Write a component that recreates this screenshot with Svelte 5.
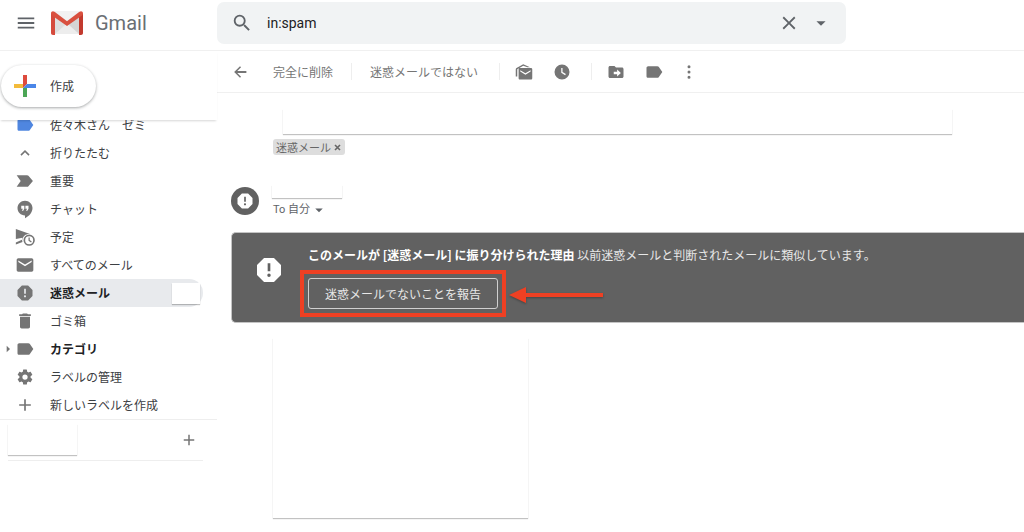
<script lang="ts">
  type NavItem = {
    label: string;
    icon: string;
    bold?: boolean;
    selected?: boolean;
    expandable?: boolean;
    color?: string;
  };

  let query = "in:spam";

  const items: NavItem[] = [
    { label: "佐々木さん　ゼミ", icon: "label", color: "#4f86e0" },
    { label: "折りたたむ", icon: "collapse" },
    { label: "重要", icon: "important" },
    { label: "チャット", icon: "chat" },
    { label: "予定", icon: "scheduled" },
    { label: "すべてのメール", icon: "mail" },
    { label: "迷惑メール", icon: "spam", bold: true, selected: true },
    { label: "ゴミ箱", icon: "trash" },
    { label: "カテゴリ", icon: "label", bold: true, expandable: true },
    { label: "ラベルの管理", icon: "gear" },
    { label: "新しいラベルを作成", icon: "plus" },
  ];

  const paths: Record<string, string> = {
    menu: "M3 18h18v-2H3v2zm0-5h18v-2H3v2zm0-7v2h18V6H3z",
    search:
      "M15.5 14h-.79l-.28-.27A6.47 6.47 0 0 0 16 9.5 6.5 6.5 0 1 0 9.5 16c1.61 0 3.09-.59 4.23-1.57l.27.28v.79l5 4.99L20.49 19l-4.99-5zm-6 0C7.01 14 5 11.99 5 9.5S7.01 5 9.5 5 14 7.01 14 9.5 11.99 14 9.5 14z",
    close:
      "M19 6.41L17.59 5 12 10.59 6.41 5 5 6.41 10.59 12 5 17.59 6.41 19 12 13.41 17.59 19 19 17.59 13.41 12z",
    down: "M7 10l5 5 5-5z",
    right: "M10 17l5-5-5-5z",
    back: "M20.5 10.7H8.4l5-5L12 4.2 4.2 12l7.8 7.8 1.4-1.5-5-5h12.1z",
    label:
      "M17.63 5.84C17.27 5.33 16.67 5 16 5H5c-1.1 0-2 .9-2 2v10c0 1.1.9 2 2 2h11c.67 0 1.27-.33 1.63-.84L22 12l-4.37-6.16z",
    collapse: "M12 8.5l-5.5 5.4 1.3 1.3L12 11l4.2 4.2 1.3-1.3z",
    important:
      "M2 19h12.5c.67 0 1.27-.33 1.63-.84L21.5 12l-5.37-6.16c-.36-.51-.96-.84-1.63-.84H2l4.84 7z",
    chat: "M12 2C7 2 3 6 3 10.9s4 8.9 9 8.9V23c5.2-2.4 9-7 9-12.1C21 6 17 2 12 2zM11.2 11.7L9.8 14.2H8.2l1.3-2.5H7.5V8.2h3.7zm5 0l-1.4 2.5h-1.6l1.3-2.5h-2V8.2h3.7z",
    scheduled:
      "M1 2.5l17 6c-4.500-.6-8.300 2-9 6.500L1 18.500zM1 21v-6.500L9 13c-.6 2-.5 3.500 0 5zM17 9a6.800 6.800 0 1 0 0 13.600A6.800 6.800 0 0 0 17 9zm0 11.600a4.800 4.800 0 1 1 0-9.600 4.800 4.800 0 0 1 0 9.600zM16.200 12.500h1.500v3.200l2.400 1.600-.9 1.200-3-2z",
    mail: "M20 4H4c-1.1 0-2 .9-2 2v12c0 1.1.9 2 2 2h16c1.1 0 2-.9 2-2V6c0-1.1-.9-2-2-2zm0 4.5l-8 5-8-5v-2l8 5 8-5z",
    spam: "M15.73 3H8.27L3 8.27v7.46L8.27 21h7.46L21 15.73V8.27zM12 17.3a1.3 1.3 0 1 1 0-2.6 1.3 1.3 0 0 1 0 2.6zM13 13h-2V7h2z",
    trash: "M6 19c0 1.1.9 2 2 2h8c1.1 0 2-.9 2-2V7H6v12zM19 4h-3.5l-1-1h-5l-1 1H5v2h14V4z",
    gear: "M19.43 12.98c.04-.32.07-.64.07-.98s-.03-.66-.07-.98l2.11-1.65c.19-.15.24-.42.12-.64l-2-3.46c-.12-.22-.39-.3-.61-.22l-2.49 1c-.52-.4-1.08-.73-1.69-.98l-.38-2.65A.49.49 0 0 0 14 2h-4c-.25 0-.46.18-.49.42l-.38 2.65c-.61.25-1.17.59-1.69.98l-2.49-1c-.23-.09-.49 0-.61.22l-2 3.46c-.13.22-.07.49.12.64l2.11 1.65c-.04.32-.07.65-.07.98s.03.66.07.98l-2.11 1.65c-.19.15-.24.42-.12.64l2 3.46c.12.22.39.3.61.22l2.49-1c.52.4 1.08.73 1.69.98l.38 2.65c.03.24.24.42.49.42h4c.25 0 .46-.18.49-.42l.38-2.65c.61-.25 1.17-.59 1.69-.98l2.49 1c.23.09.49 0 .61-.22l2-3.46c.12-.22.07-.49-.12-.64zM12 15.5a3.5 3.5 0 1 1 0-7 3.5 3.5 0 0 1 0 7z",
    plus: "M19 13h-6v6h-2v-6H5v-2h6V5h2v6h6z",
    unread:
      "M1 18V8.5c0-.8.4-1.4 1-1.7L11 1.5l9 4.3h-3.5L11 3.8 3 8.3V18zM6.5 6.5h14.8c1 0 1.7.8 1.7 1.7v12.1c0 1-.7 1.7-1.7 1.7H6.5c-1 0-1.7-.7-1.7-1.7V8.2c0-.9.7-1.7 1.7-1.7zm.5 3v1.9l6.9 4.2 6.9-4.2V9.5l-6.9 4.2z",
    clock: "M12 2a10 10 0 1 0 0 20 10 10 0 0 0 0-20zm4.2 14.3L11 13V6.5h1.7v5.6l4.4 2.7z",
    move: "M20 6h-8l-2-2H4c-1.1 0-2 .9-2 2v12c0 1.1.9 2 2 2h16c1.1 0 2-.9 2-2V8c0-1.1-.9-2-2-2zm-6.5 12v-3H9v-3.5h4.5v-3l5 4.7z",
    more: "M12 7a2 2 0 1 0 0-4 2 2 0 0 0 0 4zm0 7a2 2 0 1 0 0-4 2 2 0 0 0 0 4zm0 7a2 2 0 1 0 0-4 2 2 0 0 0 0 4z",
  };
</script>

{#snippet icon(name: string, size: number)}
  <svg width={size} height={size} viewBox="0 0 24 24" fill="currentColor" fill-rule="evenodd" aria-hidden="true">
    <path d={paths[name]} />
  </svg>
{/snippet}

<div class="app">
  <header>
    <div class="brand">
      <button class="menu" aria-label="メインメニュー">{@render icon("menu", 22)}</button>
      <svg class="logo" width="32" height="24" viewBox="0 0 32 24" aria-hidden="true">
        <path d="M2 1h28v22H2z" fill="#e8e8e8" />
        <path d="M4 3v20L16 12z" fill="#dedede" />
        <path d="M28 3v20L16 12z" fill="#d5d5d5" />
        <path d="M4 23l12-10 12 10z" fill="#ededed" />
        <path d="M3 0h26L16 10z" fill="#f2f2f2" />
        <path d="M0 2v20c0 1.2.8 2 2 2h2V5.5z" fill="#d54b3d" />
        <path d="M32 2v20c0 1.2-.8 2-2 2h-2V5.5z" fill="#c23a2e" />
        <path d="M0 2.2C0 .3 2 -.5 3.5.7L16 10.2 28.5.7C30 -.5 32 .3 32 2.2c0 1-.4 1.7-1 2.2L16 15 1 4.4C.4 3.9 0 3.2 0 2.2z" fill="#d9503f" />
      </svg>
      <span class="name">Gmail</span>
    </div>
    <div class="top">
      <form class="search" on:submit|preventDefault>
        <button aria-label="検索">{@render icon("search", 22)}</button>
        <input type="text" aria-label="メールを検索" bind:value={query} />
        <button type="button" aria-label="検索をクリア" on:click={() => (query = "")}>{@render icon("close", 22)}</button>
        <button type="button" aria-label="検索オプション">{@render icon("down", 22)}</button>
      </form>
    </div>
  </header>

  <div class="content">
    <aside>
      <div class="compose-area">
        <button class="compose">
          <svg width="22" height="22" viewBox="0 0 22 22" aria-hidden="true">
            <path d="M9 0h4v9l-4 4z" fill="#dd4b3e" />
            <path d="M0 9h9v4H0z" fill="#f3bb3b" />
            <path d="M13 9h9v4H9z" fill="#4a86e8" />
            <path d="M9 13h4v9H9z" fill="#4ca656" />
          </svg>
          作成
        </button>
      </div>
      <nav>
        <ul>
          {#each items as item (item.label)}
            <li>
              <a href="#{item.icon}" class:bold={item.bold} class:selected={item.selected}>
                <span class="expander">
                  {#if item.expandable}{@render icon("right", 16)}{/if}
                </span>
                <span class="icon" style={item.color ? `color: ${item.color}` : null}>
                  {@render icon(item.icon, item.icon === "gear" ? 18 : 20)}
                </span>
                {item.label}
                {#if item.selected}<span class="blank count"></span>{/if}
              </a>
            </li>
          {/each}
        </ul>
      </nav>
      <div class="account">
        <span class="blank user"></span>
        <button aria-label="新しい会話">{@render icon("plus", 18)}</button>
      </div>
    </aside>

    <main>
      <div class="toolbar">
        <button class="tool back" aria-label="戻る">{@render icon("back", 18)}</button>
        <button class="text">完全に削除</button>
        <span class="separator"></span>
        <button class="text">迷惑メールではない</button>
        <span class="separator"></span>
        <button class="tool" aria-label="未読にする">{@render icon("unread", 18)}</button>
        <button class="tool" aria-label="スヌーズ">{@render icon("clock", 18)}</button>
        <span class="separator"></span>
        <button class="tool" aria-label="移動">{@render icon("move", 18)}</button>
        <button class="tool" aria-label="ラベル">{@render icon("label", 20)}</button>
        <button class="tool more" aria-label="その他">{@render icon("more", 18)}</button>
      </div>

      <article>
        <div class="blank subject"></div>
        <span class="chip">
          迷惑メール
          <button aria-label="ラベルを削除">
            <svg width="7" height="7" viewBox="0 0 7 7" aria-hidden="true">
              <path d="M1 1l5 5M6 1L1 6" stroke="currentColor" stroke-width="1.6" />
            </svg>
          </button>
        </span>

        <div class="sender">
          <span class="avatar">{@render icon("spam", 20)}</span>
          <div>
            <div class="blank from"></div>
            <button class="to">To 自分 {@render icon("down", 18)}</button>
          </div>
        </div>

        <section class="warning">
          <span class="sign">{@render icon("spam", 32)}</span>
          <div>
            <p><strong>このメールが [迷惑メール] に振り分けられた理由</strong> 以前迷惑メールと判断されたメールに類似しています。</p>
            <div class="report">
              <button>迷惑メールでないことを報告</button>
              <span class="highlight"></span>
              <svg class="arrow" width="95" height="20" viewBox="0 0 95 20" aria-hidden="true">
                <path d="M0 10L17 2v6h77v4H17v6z" fill="#ee4023" />
              </svg>
            </div>
          </div>
        </section>

        <div class="blank body"></div>
      </article>
    </main>
  </div>
</div>

<style>
  :global(body) {
    margin: 0;
    background: #fff;
  }
  .app {
    font-family: "Noto Sans CJK JP", sans-serif;
    font-size: 12px;
    line-height: 18px;
    color: #202124;
    overflow: hidden;
  }
  button {
    display: flex;
    align-items: center;
    justify-content: center;
    padding: 0;
    border: 0;
    background: none;
    font: inherit;
    color: inherit;
    cursor: pointer;
  }
  svg {
    display: block;
    flex: none;
  }
  .blank {
    display: block;
    background: #fff;
    box-shadow: 0 1px 1px rgba(0, 0, 0, 0.24);
  }
  header {
    display: flex;
    height: 50px;
    border-bottom: 1px solid #f0f0f0;
    color: #5f6368;
  }
  .brand {
    display: flex;
    align-items: center;
    width: 217px;
    height: 46px;
    flex: none;
  }
  .menu {
    width: 51px;
  }
  .name {
    margin-left: 12px;
    font-family: Roboto, sans-serif;
    font-size: 20px;
    line-height: 24px;
    color: #6b6f74;
  }
  .top {
    flex: 1;
    padding-top: 2px;
  }
  .search {
    display: flex;
    align-items: center;
    width: 78%;
    height: 42px;
    box-sizing: border-box;
    padding: 0 9px;
    border-radius: 7px;
    background: #f1f3f4;
  }
  .search button {
    width: 32px;
    height: 32px;
  }
  .search input {
    flex: 1;
    min-width: 0;
    padding: 0 0 0 9px;
    border: 0;
    outline: 0;
    background: none;
    font-family: Roboto, sans-serif;
    font-size: 14px;
    color: #202124;
  }
  .content {
    display: flex;
  }
  aside {
    width: 217px;
    flex: none;
  }
  .compose-area {
    position: relative;
    padding: 14px 0 13px 1px;
    box-shadow: 0 2px 2px -1px rgba(0, 0, 0, 0.16);
    background: #fff;
  }
  .compose {
    justify-content: flex-start;
    gap: 14px;
    width: 95px;
    height: 42px;
    padding-left: 13px;
    border-radius: 21px;
    box-shadow: 0 1px 3px rgba(60, 64, 67, 0.45);
    color: #3c4043;
  }
  nav {
    overflow: hidden;
    border-bottom: 1px solid #eee;
  }
  ul {
    list-style: none;
    margin: -9px 0 0;
    padding: 0;
  }
  nav a {
    display: flex;
    align-items: center;
    height: 28px;
    margin-right: 14px;
    border-radius: 0 14px 14px 0;
    color: #3c4043;
    text-decoration: none;
  }
  nav .selected {
    background: #e8eaed;
  }
  nav .bold {
    font-weight: 700;
    color: #202124;
  }
  .expander {
    width: 15px;
    color: #757575;
  }
  .icon {
    display: flex;
    justify-content: center;
    width: 20px;
    margin-right: 15px;
    color: #757575;
  }
  .count {
    width: 28px;
    height: 21px;
    margin: 0 3px 0 auto;
  }
  .account {
    display: flex;
    align-items: flex-start;
    justify-content: space-between;
    height: 36px;
    margin: 0 14px 0 8px;
    padding-top: 4px;
    border-bottom: 1px solid #eee;
  }
  .user {
    width: 69px;
    height: 31px;
  }
  .account button {
    width: 28px;
    height: 32px;
    color: #757575;
  }
  main {
    flex: 1;
    min-width: 0;
  }
  .toolbar {
    display: flex;
    align-items: center;
    height: 41px;
    border-bottom: 1px solid #f0f0f0;
    color: #757575;
  }
  .tool {
    width: 38px;
    height: 28px;
  }
  .back {
    width: 46px;
  }
  .more {
    width: 32px;
  }
  .text {
    padding: 0 18px 0 10px;
    white-space: nowrap;
  }
  .separator + .text {
    padding: 0 21px 0 18px;
  }
  .separator {
    width: 1px;
    height: 17px;
    background: #eee;
  }
  .separator + .tool {
    margin-left: 5px;
  }
  .tool + .separator {
    margin-left: 10px;
  }
  article {
    padding: 16px 0 12px 14px;
  }
  .subject {
    height: 25px;
    margin: 0 72px 5px 52px;
  }
  .chip {
    display: inline-flex;
    align-items: center;
    gap: 3px;
    height: 16px;
    margin-left: 42px;
    padding: 0 4px 0 3px;
    border-radius: 3px;
    background: #ddd;
    font-size: 11px;
    color: #666;
    vertical-align: top;
  }
  .sender {
    display: flex;
    gap: 13px;
    margin-top: 28px;
  }
  .avatar {
    display: flex;
    align-items: center;
    justify-content: center;
    width: 28px;
    height: 28px;
    margin-top: 2px;
    border-radius: 50%;
    background: #616161;
    color: #fff;
  }
  .from {
    width: 70px;
    height: 13px;
  }
  .to {
    margin-top: 3px;
    padding-left: 1px;
    font-family: Roboto, "Noto Sans CJK JP", sans-serif;
    font-size: 11px;
    color: #5f6368;
  }
  .warning {
    display: flex;
    margin-top: 13px;
    padding: 13px 0;
    border: 1px solid #c4c4c4;
    border-right: 0;
    border-radius: 5px 0 0 5px;
    background: #616161;
    color: #e8e8e8;
  }
  .sign {
    width: 32px;
    margin: 8px 23px 0 21px;
    color: #fff;
  }
  .warning p {
    margin: 0;
  }
  .warning strong {
    color: #fff;
  }
  .report {
    position: relative;
    width: max-content;
    margin-top: 14px;
  }
  .report button {
    height: 31px;
    padding: 0 16px;
    border: 1px solid #d0d0d0;
    border-radius: 3px;
  }
  .highlight {
    position: absolute;
    inset: -8px;
    border: 4px solid #ee4023;
    pointer-events: none;
  }
  .arrow {
    position: absolute;
    top: 7px;
    left: calc(100% + 11px);
    filter: drop-shadow(0 1px 1px rgba(0, 0, 0, 0.3));
  }
  .body {
    width: 255px;
    height: 180px;
    margin: 15px 0 0 42px;
  }
</style>
